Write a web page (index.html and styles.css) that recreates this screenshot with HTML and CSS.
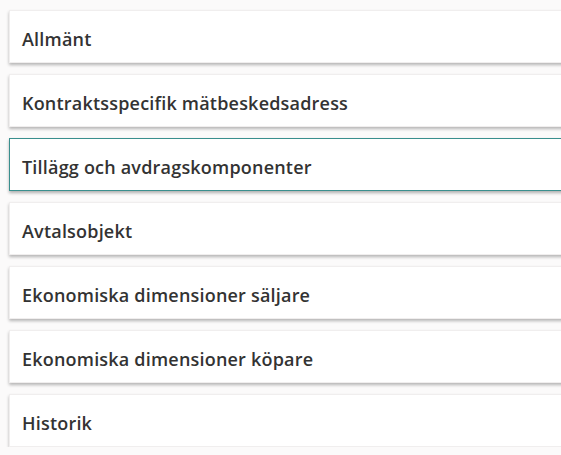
FILE: index.html
```html
<!DOCTYPE html>
<html lang="sv">
<head>
  <meta charset="UTF-8">
  <meta name="viewport" content="width=device-width, initial-scale=1">
  <title>Avtal</title>
  <link rel="stylesheet" href="styles.css">
</head>
<body>

  <div class="sections">
    <div class="section">Allmänt</div>
    <div class="section">Kontraktsspecifik mätbeskedsadress</div>
    <div class="section active">Tillägg och avdragskomponenter</div>
    <div class="section">Avtalsobjekt</div>
    <div class="section">Ekonomiska dimensioner säljare</div>
    <div class="section">Ekonomiska dimensioner köpare</div>
    <div class="section">Historik</div>
  </div>

</body>
</html>
```

FILE: styles.css
```css
body {
  font-family: 'Open Sans', 'Noto Sans', sans-serif;
  background: #fbfafa;
  margin: 0;
  padding: 10px 0 0 9px;
  overflow: hidden;
}
.sections {
  display: flex;
  flex-direction: column;
  gap: 11px;
  margin-right: -20px;
}
.section {
  height: 53px;
  box-sizing: border-box;
  display: flex;
  align-items: center;
  padding: 4px 12px 0;
  background: #ffffff;
  border: 1px solid #f0eeee;
  box-shadow: 0 2px 3px rgba(0,0,0,0.28);
  font-size: 18px;
  font-weight: 600;
  letter-spacing: 0.2px;
  color: #333333;
}
.section.active {
  border: 1px solid #3a8f8e;
  box-shadow: 0 2px 3px rgba(0,0,0,0.3);
}
```
